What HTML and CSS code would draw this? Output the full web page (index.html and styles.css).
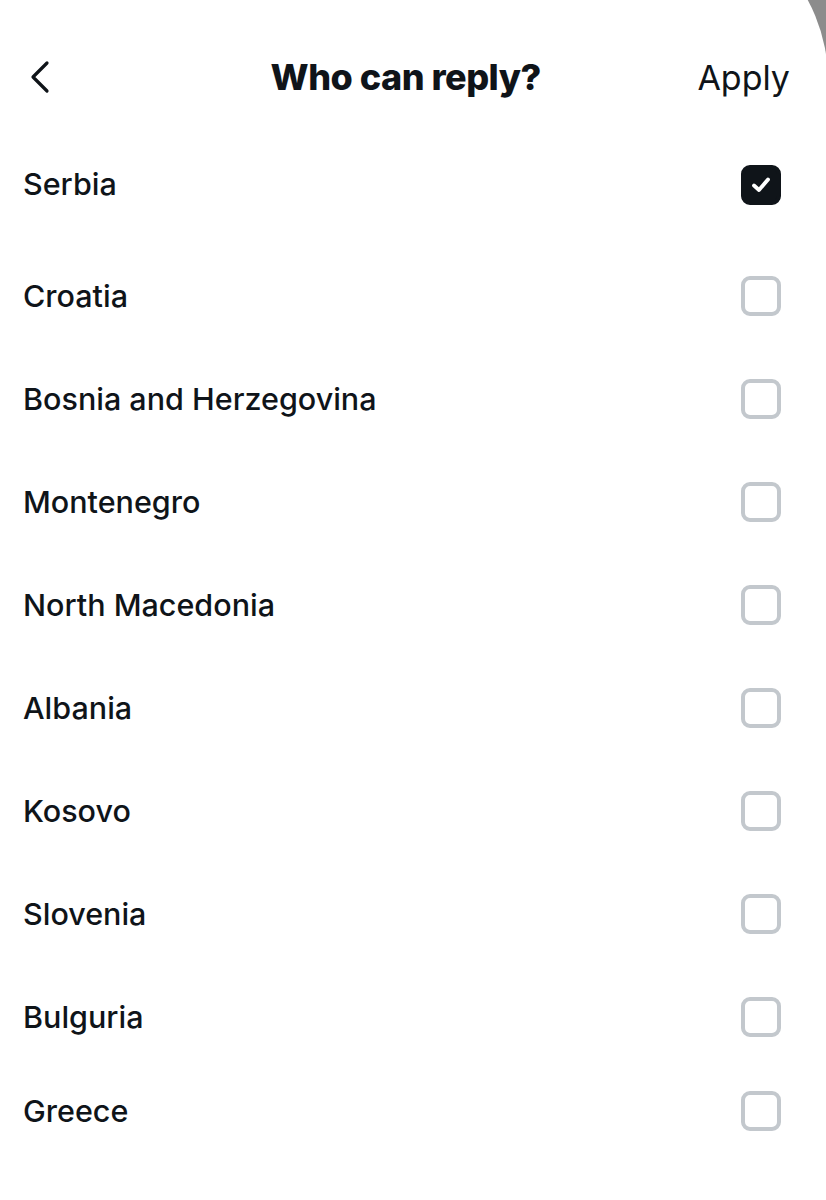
FILE: index.html
```html
<!DOCTYPE html>
<html lang="en">
<head>
    <meta charset="UTF-8">
    <meta name="viewport" content="width=device-width, initial-scale=1.0">
    <title>Who can reply?</title>
    <link rel="stylesheet" href="styles.css">
</head>
<body>
    <div class="sheet">
        <header class="top-bar">
            <button class="back-btn" aria-label="Back">
                <svg width="24" height="34" viewBox="0 0 24 34">
                    <path d="M19 3 L5 17 L19 31" fill="none" stroke="#0f1419" stroke-width="3.2" stroke-linecap="round" stroke-linejoin="round"/>
                </svg>
            </button>
            <h1>Who can reply?</h1>
            <button class="apply-btn">Apply</button>
        </header>

        <ul class="country-list">
            <li class="country first"><span>Serbia</span><span class="box checked">
                <svg width="24" height="24" viewBox="0 0 24 24"><path d="M5 12.5 L10 17 L19 6.5" fill="none" stroke="#fff" stroke-width="3.8" stroke-linecap="round" stroke-linejoin="round"/></svg>
            </span></li>
            <li class="country"><span>Croatia</span><span class="box"></span></li>
            <li class="country"><span>Bosnia and Herzegovina</span><span class="box"></span></li>
            <li class="country"><span>Montenegro</span><span class="box"></span></li>
            <li class="country"><span>North Macedonia</span><span class="box"></span></li>
            <li class="country"><span>Albania</span><span class="box"></span></li>
            <li class="country"><span>Kosovo</span><span class="box"></span></li>
            <li class="country"><span>Slovenia</span><span class="box"></span></li>
            <li class="country"><span>Bulguria</span><span class="box"></span></li>
            <li class="country last"><span>Greece</span><span class="box"></span></li>
        </ul>
    </div>
</body>
</html>
```

FILE: styles.css
```css
html, body {
    margin: 0;
    padding: 0;
    height: 100%;
    overflow: hidden;
}

body {
    background: #8c8c8c;
    font-family: Inter, "Noto Sans", sans-serif;
    color: #0f1419;
}

/* sheet runs past the top edge so only the lower part of its corner shows */
.sheet {
    background: #fff;
    width: 828px;
    height: 1288px;
    box-sizing: border-box;
    margin-top: -88px;
    padding-top: 88px;
    border-top-right-radius: 168px;
}

.top-bar {
    display: flex;
    align-items: center;
    justify-content: space-between;
    width: 826px;
    box-sizing: border-box;
    height: 132px;
    padding: 22px 36px 0 28px;
}

.back-btn,
.apply-btn {
    background: none;
    border: none;
    padding: 0;
    cursor: pointer;
    color: #0f1419;
    font-family: inherit;
}

.back-btn svg {
    display: block;
}

.top-bar h1 {
    margin: 0 0 0 62px;
    font-size: 36px;
    font-weight: 800;
    letter-spacing: -0.5px;
}

.apply-btn {
    font-size: 34px;
    font-weight: 400;
}

.country-list {
    list-style: none;
    margin: 0;
    padding: 0;
    width: 826px;
}

.country {
    display: flex;
    align-items: center;
    justify-content: space-between;
    height: 103px;
    padding: 0 45px 0 23px;
    font-size: 30.5px;
    font-weight: 500;
}

.country.first {
    height: 112px;
    align-items: flex-start;
    padding-top: 33px;
    box-sizing: border-box;
}

.country.last {
    margin-top: -9px;
}

.box {
    width: 40px;
    height: 40px;
    box-sizing: border-box;
    border: 4px solid #c3c8cd;
    border-radius: 9px;
    display: flex;
    align-items: center;
    justify-content: center;
}

.box.checked {
    background: #0f1419;
    border-color: #0f1419;
}
```
